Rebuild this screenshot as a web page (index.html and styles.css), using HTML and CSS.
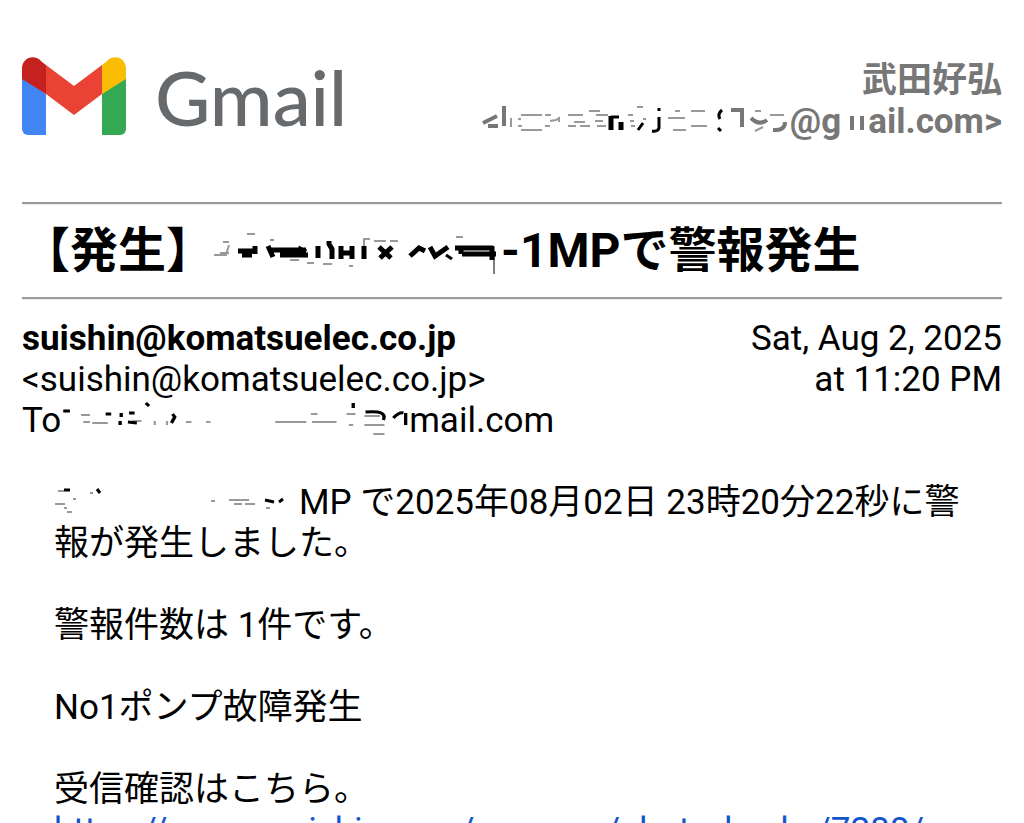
FILE: index.html
```html
<!DOCTYPE html>
<html lang="ja">
<head>
  <meta charset="UTF-8">
  <meta name="viewport" content="width=device-width, initial-scale=1.0">
  <title>Gmail</title>
  <link rel="stylesheet" href="styles.css">
</head>
<body>

<header class="header">
  <div class="brand">
    <svg class="brand-icon" viewBox="0 0 104 78" aria-hidden="true">
      <path fill="#4285f4" d="M0 20l24 17v41H6a6 6 0 0 1-6-6z"/>
      <path fill="#34a853" d="M80 37l24-17v52a6 6 0 0 1-6 6H80z"/>
      <path fill="#ea4335" d="M24 8l28 21L80 8v29L52 58 24 37z"/>
      <path fill="#c5221f" d="M0 12C0 1 12-4 20 5l4 3v29L0 22z"/>
      <path fill="#fbbc04" d="M104 12c0-11-12-16-20-7l-4 3v29l24-15z"/>
    </svg>
    <span class="brand-name">Gmail</span>
  </div>
  <div class="account">
    <div>武田好弘</div>
    <div class="line">
      <svg class="marks marks-account" viewBox="0 0 307 41" aria-hidden="true">
        <path class="soft" d="M28 17v9M38 14h21M35 18h3M35 25h4M38 29h21M62 14h6M67 20l6-1 3-2v4M62 25h5M85 14h15M91 21h11M85 25h8M97 25h10M106 10h11M113 14h12M112 20h8M114 25h9M145 14h5M147 20h4M148 25h4M154 6h6M160 18h3M192 10h5M185 17h17M190 29h13M208 10h14M208 25h16M272 10h6M272 30l8-4M287 14h14"/>
        <path class="gray" d="M0 22l14-7M5 25h10M21 5v20M248 9h9M259 7v19M268 17q8 8 16 2M290 29q12 1 12-8"/>
        <path class="ink bold" d="M128 15v14M138 21v8"/>
        <path class="ink" d="M128 16h8M155 29l5-7M176 7v3M176 16v11q-1 4-7 3M239 9q-5 4-2 9M238 30l-3-3"/>
      </svg>
      <span>@g</span>
      <svg class="marks marks-gap" viewBox="0 0 27 41" aria-hidden="true">
        <path class="gray" d="M11 15v14M21 15v14"/>
      </svg>
      <span>ail.com&gt;</span>
    </div>
  </div>
</header>

<main>
  <hr>
  <h1 class="line">
    <span>【発生】</span>
    <svg class="marks marks-title" viewBox="0 0 287 72" aria-hidden="true">
      <path class="soft" d="M0 40h12l3-10M6 38h9M9 27h6M33 19h8M56 25h4M76 45h9M93 48h7M109 49h9M135 51h4M150 36V24h6M160 26h12M176 26h8M242 22h7"/>
      <path class="ink bold" d="M24 36h16M28 40h10M41 31v8M54 31l5 11M56 35h36M66 40h28M84 33l8 4M104 31v12M115 26v3l3 5v10M127 31v13M127 38h12M138 31v13M150 31v13M165 32l12 11M178 32l-12 11M196 41l9-8 6 3M216 32l5 9 13-9M241 33h38M248 39h34M247 31v8M278 31v14"/>
      <path class="ink" d="M232 40l6 4"/>
      <path class="ink thin" d="M280 36v23"/>
    </svg>
    <span>-1MPで警報発生</span>
  </h1>
  <hr>

  <div class="meta">
    <div>
      <div><b>suishin@komatsuelec.co.jp</b></div>
      <div>&lt;suishin@komatsuelec.co.jp&gt;</div>
      <div class="line">
        <span>To</span>
        <svg class="marks marks-to" viewBox="0 -5 312 41" preserveAspectRatio="none" aria-hidden="true">
          <path class="soft" d="M18 10h8M20 17h6M28 18h14M64 16h8M84 16v4M95 16v4M112 17h5M130 17h4M192 17h28M224 9h6M225 17h22M256 9h8M258 20h4M272 11h14M272 20h18M280 29h10"/>
          <path class="ink" d="M2 6h6M40 9h5M54 8v4M53 16v4M60 17l8 1M61 8h5M76-2l3 3M100 9l2 3-3 6M262-2v5M273 7q20-2 16 8M298 13q5-6 9-5M309 8v12"/>
        </svg>
        <span>mail.com</span>
      </div>
    </div>
    <div class="date">
      <div>Sat, Aug 2, 2025</div>
      <div>at 11:20 PM</div>
    </div>
  </div>

  <div class="message">
    <p><svg class="marks marks-body" viewBox="0 0 245 41" aria-hidden="true">
      <path class="soft" d="M4 9h6M1 22h10M19 17h3M10 26h3M13 30h5M36 11h3M157 19h4M175 18h20M180 22h8M191 22h10M212 26h4"/>
      <path class="ink" d="M10 8h6M43 7l3 4M211 18l9 2M225 20l4-3"/>
    </svg>MP で2025年08月02日 23時20分22秒に警報が発生しました。</p>
    <p>警報件数は 1件です。</p>
    <p>No1ポンプ故障発生</p>
    <p>受信確認はこちら。<br>
    <a href="#">https://www.xsuishin.com/suspnse/alert_checks/7288/</a></p>
  </div>
</main>

</body>
</html>
```

FILE: styles.css
```css
body {
  font-family: Roboto, "Noto Sans CJK JP", sans-serif;
  font-size: 35px;
  line-height: 41px;
  margin: 0;
  padding: 56px 22px 0;
  background: #fff;
  color: #000;
}

.header {
  display: flex;
  justify-content: space-between;
  height: 146px;
}

.brand {
  display: flex;
  align-items: flex-start;
  gap: 29px;
}

.brand-icon {
  width: 104px;
  height: 80px;
}

.brand-name {
  font-family: Lato, sans-serif;
  font-size: 76px;
  font-weight: 500;
  line-height: 82px;
  color: #666a6d;
}

.account {
  padding-top: 4px;
  text-align: right;
  font-weight: 700;
  color: #777;
}

.line {
  display: flex;
}

.account .line {
  justify-content: flex-end;
}

hr {
  margin: 0;
  border: 0;
  border-top: 2px solid #999;
  border-bottom: 1px solid #eee;
}

h1 {
  margin: 0;
  padding: 10px 0;
  font-size: 48px;
  line-height: 71px;
}

.meta {
  display: flex;
  justify-content: space-between;
  padding-top: 18px;
}

.date {
  text-align: right;
}

.message {
  padding: 41px 32px 0;
}

p {
  margin: 0 0 41px;
}

a {
  color: #15c;
  text-decoration: none;
}

/* leftover strokes of the hidden names */
.marks {
  height: 41px;
  flex: none;
  fill: none;
  overflow: visible;
}

.marks-account {
  width: 307px;
}

.marks-gap {
  width: 27px;
}

.marks-title {
  width: 287px;
  height: 72px;
}

.marks-to {
  width: 348px;
}

.marks-body {
  width: 245px;
  vertical-align: top;
}

.soft {
  stroke: #999;
  stroke-width: 2;
}

.gray {
  stroke: #777;
  stroke-width: 4;
}

.ink {
  stroke: #000;
  stroke-width: 3;
}

.bold {
  stroke-width: 5;
}

.thin {
  stroke-width: 1;
}
```
